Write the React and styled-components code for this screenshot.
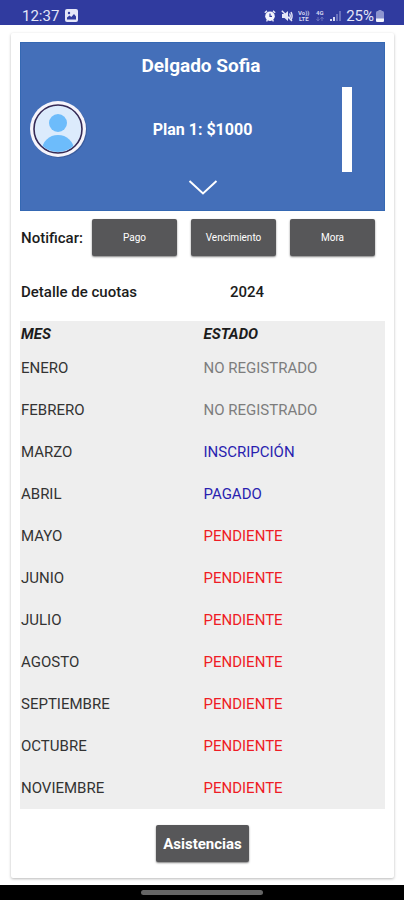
import React, { useState } from "react";
import styled, { createGlobalStyle } from "styled-components";

const months = [
  { name: "ENERO", status: "NO REGISTRADO" },
  { name: "FEBRERO", status: "NO REGISTRADO" },
  { name: "MARZO", status: "INSCRIPCIÓN" },
  { name: "ABRIL", status: "PAGADO" },
  { name: "MAYO", status: "PENDIENTE" },
  { name: "JUNIO", status: "PENDIENTE" },
  { name: "JULIO", status: "PENDIENTE" },
  { name: "AGOSTO", status: "PENDIENTE" },
  { name: "SEPTIEMBRE", status: "PENDIENTE" },
  { name: "OCTUBRE", status: "PENDIENTE" },
  { name: "NOVIEMBRE", status: "PENDIENTE" },
];

const statusColors = {
  "NO REGISTRADO": "#7d7d7d",
  "INSCRIPCIÓN": "#2a1fb0",
  PAGADO: "#2a1fb0",
  PENDIENTE: "#ee1c25",
};

const notifications = ["Pago", "Vencimiento", "Mora"];

const GlobalStyle = createGlobalStyle`
  * {
    box-sizing: border-box;
  }

  body {
    margin: 0;
    background-color: #fff;
    color: #1c1c1c;
    font-family: Roboto, "Liberation Sans", sans-serif;
  }
`;

const Screen = styled.div`
  display: flex;
  flex-direction: column;
  min-height: 100vh;
`;

const StatusBar = styled.header`
  display: flex;
  align-items: center;
  justify-content: space-between;
  height: 25px;
  padding: 6px 20px 0 22px;
  background-color: #303b9f;
  color: #e4e6f8;
  font-size: 15px;
  line-height: 18px;
`;

const StatusGroup = styled.div`
  display: flex;
  align-items: center;
  gap: ${({ $gap }) => $gap}px;
`;

const Main = styled.main`
  flex: 1;
  padding: 8px 10px 7px 11px;
`;

const Card = styled.section`
  display: flex;
  flex-direction: column;
  padding: 9px 9px 16px;
  border-radius: 2px;
  background-color: #fff;
  box-shadow: 0 1px 3px rgba(0, 0, 0, 0.28);
`;

const Profile = styled.div`
  display: flex;
  flex-direction: column;
  align-items: center;
  height: 169px;
  padding: 11px 32px 14px 9px;
  border: 1px solid #3568b3;
  background-color: #446fb9;
  color: #fff;
`;

const Name = styled.h1`
  margin: 0;
  padding-left: 20px;
  font-size: 19px;
  font-weight: 700;
  line-height: 24px;
`;

const ProfileRow = styled.div`
  display: grid;
  grid-template-columns: 57px 1fr 10px;
  align-items: center;
  width: 100%;
  margin-top: 9px;
`;

const Plan = styled.p`
  margin: 0;
  padding-right: 24px;
  font-size: 16px;
  font-weight: 700;
  text-align: center;
`;

const SideBar = styled.div`
  height: 85px;
  background-color: #fff;
`;

const ExpandButton = styled.button`
  display: flex;
  margin: 7px 0 0 23px;
  padding: 0;
  border: 0;
  background: none;
  cursor: pointer;
`;

const NotifyRow = styled.div`
  display: grid;
  grid-template-columns: 57px repeat(3, 1fr);
  align-items: center;
  gap: 14px;
  padding: 8px 10px 0 1px;
`;

const NotifyLabel = styled.span`
  font-size: 15px;
  font-weight: 500;
  white-space: nowrap;
`;

const Button = styled.button`
  height: 37px;
  padding: 0 7px;
  border: 0;
  border-radius: 2px;
  background-color: #575759;
  box-shadow: 0 1px 2px rgba(0, 0, 0, 0.5);
  color: #fff;
  font-family: inherit;
  font-size: ${({ $large }) => ($large ? 15 : 10)}px;
  font-weight: ${({ $large }) => ($large ? 700 : 400)};
  cursor: pointer;
`;

const DetailRow = styled.div`
  display: grid;
  grid-template-columns: 209px 1fr;
  padding: 26px 1px 19px;
  font-size: 15px;
  font-weight: 500;
  line-height: 20px;
`;

const DetailTitle = styled.h2`
  margin: 0;
  font: inherit;
`;

const Table = styled.table`
  width: 100%;
  border-collapse: collapse;
  background-color: #eee;
  font-size: 15px;
  text-align: left;
`;

const HeadCell = styled.th`
  width: 50%;
  height: 26px;
  padding: 0 1px;
  font-style: italic;
  font-weight: 700;
`;

const Cell = styled.td`
  height: 42px;
  padding: 0 1px;
  color: ${({ $color }) => $color || "#333"};
`;

const Footer = styled.div`
  display: flex;
  justify-content: center;
  padding-top: 16px;
`;

const NavBar = styled.footer`
  display: flex;
  justify-content: center;
  height: 15px;
  padding-top: 5px;
  background-color: #000;
`;

const NavHandle = styled.div`
  width: 122px;
  height: 5px;
  border-radius: 3px;
  background-color: #656565;
`;

const ImageIcon = () => (
  <svg width="13" height="13" viewBox="0 0 13 13">
    <rect width="13" height="13" rx="2" fill="#e4e6f8" />
    <circle cx="4" cy="4" r="1.2" fill="#303b9f" />
    <path d="M2 10.5V8.5L4.5 6.5L6.3 8L9 5L11 7.5V10.5Z" fill="#303b9f" />
  </svg>
);

const AlarmIcon = () => (
  <svg width="12" height="12" viewBox="0 0 12 12" fill="none">
    <path d="M0.8 2.8L3 0.9M11.2 2.8L9 0.9M2.5 11.4L3.5 10M9.5 11.4L8.5 10" stroke="#e4e6f8" strokeWidth="1.4" />
    <circle cx="6" cy="6.2" r="4.8" fill="#f4f5fd" />
    <path d="M6 3.6V6.4H8" stroke="#303b9f" strokeWidth="1.2" />
  </svg>
);

const MuteIcon = () => (
  <svg width="12" height="12" viewBox="0 0 12 12" fill="none">
    <path d="M1 4H3.5L7 1V11L3.5 8H1Z" fill="#e4e6f8" />
    <path d="M8.5 3.5Q10 6 8.5 8.5M10 2Q12.2 6 10 10M0.8 0.8L11 11" stroke="#e4e6f8" strokeWidth="1.4" />
  </svg>
);

const VolteIcon = () => (
  <svg width="12" height="13" viewBox="0 0 12 13" fill="#d3d6f1" fontFamily="Roboto, sans-serif" fontWeight="700">
    <text x="0" y="6" fontSize="6">Vo))</text>
    <text x="1" y="12" fontSize="6">LTE</text>
  </svg>
);

const NetworkIcon = () => (
  <svg width="10" height="13" viewBox="0 0 10 13" fill="none">
    <text x="1" y="6" fontSize="6" fontWeight="700" fontFamily="Roboto, sans-serif" fill="#d3d6f1">4G</text>
    <path d="M3 12V8M1.5 10L3 12L4.5 10M7 8V12M5.5 10L7 8L8.5 10" stroke="#6971bd" />
  </svg>
);

const SignalIcon = () => (
  <svg width="11" height="12" viewBox="0 0 11 12">
    <rect x="0" y="9" width="2" height="2" fill="#d3d6f1" />
    <rect x="3" y="7" width="2" height="4" fill="#d3d6f1" />
    <rect x="6" y="4" width="2" height="7" fill="#6971bd" />
    <rect x="9" y="1" width="2" height="10" fill="#6971bd" />
  </svg>
);

const BatteryIcon = () => (
  <svg width="8" height="12" viewBox="0 0 8 12">
    <rect x="2.5" width="3" height="2" fill="#8d94cf" />
    <rect y="1" width="8" height="11" rx="1.5" fill="#8d94cf" />
    <path d="M0 8.5H8V10.5Q8 12 6.5 12H1.5Q0 12 0 10.5Z" fill="#f4f5fd" />
  </svg>
);

const Avatar = () => (
  <svg width="57" height="57" viewBox="0 0 57 57">
    <defs>
      <clipPath id="face">
        <circle cx="28" cy="28" r="23" />
      </clipPath>
    </defs>
    <circle cx="29" cy="29" r="28" fill="#36528c" opacity="0.6" />
    <circle cx="28" cy="28" r="28" fill="#f6f4fb" />
    <circle cx="28" cy="28" r="24" fill="#dcebfc" stroke="#352a56" strokeWidth="1.6" />
    <g clipPath="url(#face)" fill="#6dbcfb">
      <circle cx="28" cy="22" r="9" />
      <ellipse cx="28" cy="49" rx="16" ry="15" />
    </g>
  </svg>
);

const ChevronIcon = () => (
  <svg width="30" height="17" viewBox="0 0 30 17" fill="none">
    <path d="M1.5 2L15 14.5L28.5 2" stroke="#fff" strokeWidth="2" />
  </svg>
);

const App = () => {
  const [expanded, setExpanded] = useState(false);

  return (
    <Screen>
      <GlobalStyle />
      <StatusBar>
        <StatusGroup $gap={6}>
          <span>12:37</span>
          <ImageIcon />
        </StatusGroup>
        <StatusGroup $gap={5}>
          <AlarmIcon />
          <MuteIcon />
          <VolteIcon />
          <NetworkIcon />
          <SignalIcon />
          <StatusGroup $gap={2}>
            <span>25%</span>
            <BatteryIcon />
          </StatusGroup>
        </StatusGroup>
      </StatusBar>

      <Main>
        <Card>
          <Profile>
            <Name>Delgado Sofia</Name>
            <ProfileRow>
              <Avatar />
              <Plan>Plan 1: $1000</Plan>
              <SideBar />
            </ProfileRow>
            <ExpandButton
              type="button"
              aria-label="Ver más"
              aria-expanded={expanded}
              onClick={() => setExpanded(!expanded)}
            >
              <ChevronIcon />
            </ExpandButton>
          </Profile>

          <NotifyRow>
            <NotifyLabel>Notificar:</NotifyLabel>
            {notifications.map((label) => (
              <Button key={label} type="button">
                {label}
              </Button>
            ))}
          </NotifyRow>

          <DetailRow>
            <DetailTitle>Detalle de cuotas</DetailTitle>
            <span>2024</span>
          </DetailRow>

          <Table>
            <thead>
              <tr>
                <HeadCell>MES</HeadCell>
                <HeadCell>ESTADO</HeadCell>
              </tr>
            </thead>
            <tbody>
              {months.map((month) => (
                <tr key={month.name}>
                  <Cell>{month.name}</Cell>
                  <Cell $color={statusColors[month.status]}>{month.status}</Cell>
                </tr>
              ))}
            </tbody>
          </Table>

          <Footer>
            <Button type="button" $large>
              Asistencias
            </Button>
          </Footer>
        </Card>
      </Main>

      <NavBar>
        <NavHandle />
      </NavBar>
    </Screen>
  );
};

export default App;
